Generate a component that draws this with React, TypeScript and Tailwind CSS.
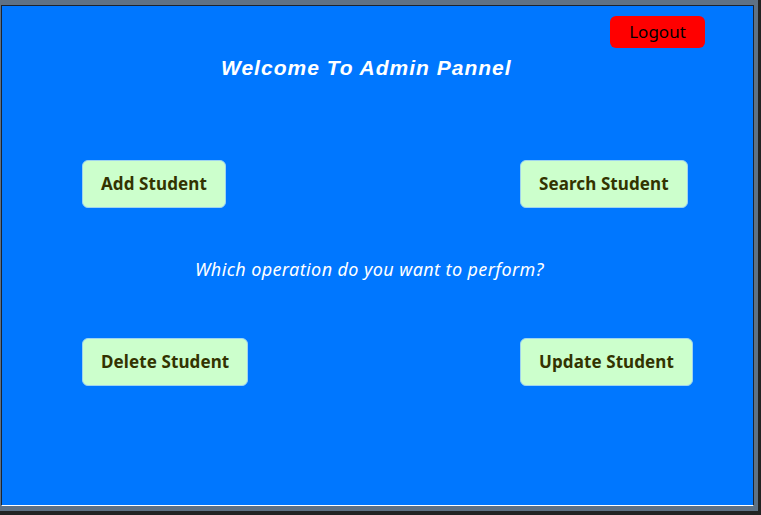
const StudentButton = ({ label }: { label: string }) => (
  <button className="h-12 rounded-md border border-[#9fd3f0] bg-[#ccffcc] px-[18px] font-['Noto_Sans',sans-serif] text-[17px] font-bold tracking-[0.1px] text-[#333300]">
    {label}
  </button>
);

export default function App() {
  return (
    <div className="h-[515px] w-[761px] bg-[#222222]">
      <div className="h-[511px] w-[758px] bg-[#5f7184] pl-[1px] pt-[5px]">
        <div className="h-[501px] w-[753px] border-b border-r border-l border-t border-b-white border-l-[#1b2430] border-r-[#1b2430] border-t-[#1b2430]">
          <div className="flex h-full w-full flex-col bg-[#0077ff]">
            <div className="flex justify-end pr-[48px] pt-[10px]">
              <button className="h-8 w-[95px] rounded-md bg-[#ff0000] font-['Noto_Sans',sans-serif] text-[17px] text-black">
                Logout
              </button>
            </div>
            <h1 className="mt-2 pl-[219px] font-['Liberation_Sans',Arial,sans-serif] text-[21px] font-bold italic leading-6 tracking-[1px] text-white">
              Welcome To Admin Pannel
            </h1>
            <div className="mt-[80px] grid grid-cols-[438px_auto] pl-[80px]">
              <div className="flex">
                <StudentButton label="Add Student" />
              </div>
              <div className="flex">
                <StudentButton label="Search Student" />
              </div>
            </div>
            <p className="mt-[49px] pl-[193px] font-['Noto_Sans',sans-serif] text-[18px] italic leading-6 tracking-[0.4px] text-white">
              Which operation do you want to perform?
            </p>
            <div className="mt-[57px] grid grid-cols-[438px_auto] pl-[80px]">
              <div className="flex">
                <StudentButton label="Delete Student" />
              </div>
              <div className="flex">
                <StudentButton label="Update Student" />
              </div>
            </div>
          </div>
        </div>
      </div>
    </div>
  );
}
